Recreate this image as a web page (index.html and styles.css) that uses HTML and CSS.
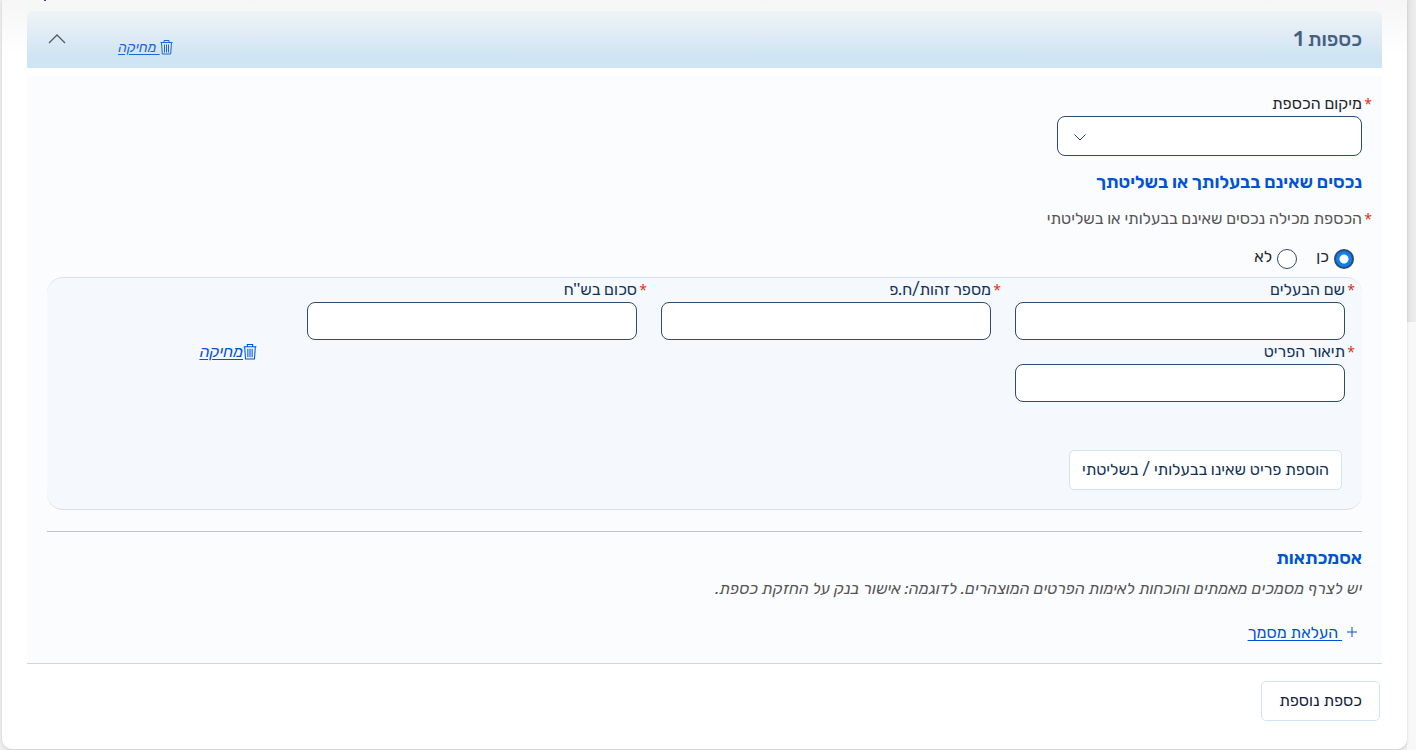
FILE: index.html
```html
<!DOCTYPE html>
<html lang="he" dir="rtl">
<head>
  <meta charset="UTF-8">
  <meta name="viewport" content="width=device-width, initial-scale=1.0">
  <title>כספות</title>
  <link rel="stylesheet" href="styles.css">
</head>
<body>
  <div class="scroll-track"><div class="scroll-thumb"></div></div>

  <main class="page-card">
    <div class="previous-section">
      <svg width="3" height="1" viewBox="0 0 3 1"><path d="M0 0h2v1H0z" fill="#0052d6"/></svg>
    </div>

    <header class="section-header">
      <h2>כספות 1</h2>
      <a href="#" class="delete-link header-delete">
        <svg class="trash" viewBox="0 0 13 15"><path d="M0.500 2.500h12M4 2.500v-2h5v2M1.500 2.500l0.800 11.500h8.400l0.800-11.500M4.500 4.500v8M6.500 4.500v8M8.500 4.500v8"/></svg><span>&nbsp;מחיקה</span>
      </a>
      <button type="button" class="collapse" aria-label="סגירה">
        <svg width="18" height="10" viewBox="0 0 18 10"><path d="M1 9l8-8 8 8"/></svg>
      </button>
    </header>

    <form class="section-body">
      <div class="field location">
        <label for="location"><span class="required">*</span>מיקום הכספת</label>
        <div class="select-wrap">
          <select id="location" name="location"><option value=""></option></select>
          <svg class="chevron" width="12" height="7" viewBox="0 0 12 7"><path d="M0.500 0.500l5.500 5.500 5.500-5.500"/></svg>
        </div>
      </div>

      <h3>נכסים שאינם בבעלותך או בשליטתך</h3>

      <p class="question"><span class="required">*</span>הכספת מכילה נכסים שאינם בבעלותי או בשליטתי</p>
      <div class="radios">
        <input type="radio" id="yes" name="foreign" checked>
        <label for="yes">כן</label>
        <input type="radio" id="no" name="foreign">
        <label for="no">לא</label>
      </div>

      <div class="items">
        <div class="item-grid">
          <div class="field">
            <label for="owner"><span class="required">*</span>שם הבעלים</label>
            <input type="text" id="owner" name="owner">
          </div>
          <div class="field">
            <label for="idnum"><span class="required">*</span>מספר זהות/ח.פ</label>
            <input type="text" id="idnum" name="idnum">
          </div>
          <div class="field">
            <label for="amount"><span class="required">*</span>סכום בש''ח</label>
            <input type="text" id="amount" name="amount">
          </div>
          <a href="#" class="delete-link item-delete">
            <svg class="trash" viewBox="0 0 13 15"><path d="M0.500 2.500h12M4 2.500v-2h5v2M1.500 2.500l0.800 11.500h8.400l0.800-11.500M4.500 4.500v8M6.500 4.500v8M8.500 4.500v8"/></svg><span>מחיקה</span>
          </a>
          <div class="field">
            <label for="description"><span class="required">*</span>תיאור הפריט</label>
            <input type="text" id="description" name="description">
          </div>
        </div>
        <button type="button" class="btn add-item">הוספת פריט שאינו בבעלותי / בשליטתי</button>
      </div>

      <hr>

      <h3>אסמכתאות</h3>
      <p class="hint">יש לצרף מסמכים מאמתים והוכחות לאימות הפרטים המוצהרים. לדוגמה: אישור בנק על החזקת כספת.</p>
      <a href="#" class="upload">
        <svg width="10" height="10" viewBox="0 0 10 10"><path d="M5 0v10M0 5h10"/></svg><span>&nbsp;העלאת מסמך</span>
      </a>
    </form>

    <button type="button" class="btn add-safe">כספת נוספת</button>
  </main>
</body>
</html>
```
FILE: styles.css
```css
* {
  box-sizing: border-box;
}
body {
  margin: 0;
  display: flex;
  align-items: stretch;
  background: #eeeeee;
  color: #212529;
  font-family: Rubik, "Open Sans", "DejaVu Sans", sans-serif;
  font-size: 16px;
  line-height: 20px;
}
h2, h3, p {
  margin: 0;
}
button, input, select {
  font: inherit;
  color: inherit;
}
svg {
  fill: none;
  stroke: currentColor;
}
.scroll-track {
  flex: 0 0 9px;
  background: #f8f8f8;
}
.scroll-thumb {
  height: 322px;
  background: linear-gradient(to left, #eeeeee, #e2e2e2);
}
.page-card {
  flex: 1;
  margin: 0 0 1px 2px;
  padding: 0 25px 28px;
  background: linear-gradient(#f6f6f6, #f8f8f8 15px, #ffffff 55px);
  border-radius: 0 0 10px 10px;
  box-shadow: 0 1px 3px rgba(0, 0, 0, 0.15);
}
.previous-section {
  display: flex;
  justify-content: flex-end;
  height: 11px;
  padding-left: 17px;
}
.previous-section svg {
  stroke: none;
}
.section-header {
  display: flex;
  align-items: center;
  height: 57px;
  padding: 0 20px 2px 21px;
  background: linear-gradient(#eff4f5, #dfebf5 24px, #d0e5f4 44px);
  border-radius: 6px 6px 0 0;
}
.section-header h2 {
  margin-left: auto;
  color: #46607f;
  font-size: 20px;
  font-weight: 500;
  line-height: 28px;
}
.collapse {
  display: flex;
  padding: 0;
  border: 0;
  background: none;
  color: #555b60;
  stroke-width: 1.3;
}
.delete-link {
  display: flex;
  align-items: center;
  color: #0052d6;
  font-style: italic;
  text-decoration: none;
}
.delete-link span,
.upload span {
  text-decoration: underline;
  text-underline-offset: 2px;
}
.header-delete {
  margin: 18px 0 0 52px;
  color: #2265d8;
  font-size: 14px;
}
.trash {
  width: 13px;
  height: 15px;
}
.section-body {
  margin-top: 8px;
  padding: 18px 20px 20px;
  background: #fbfcfe;
  border-bottom: 1px solid #d0d5dd;
}
.required {
  display: inline-block;
  width: 10px;
  color: #d9290b;
  font-family: "Open Sans", sans-serif;
  font-size: 14px;
}
.field {
  display: flex;
  flex-direction: column;
}
.field label {
  height: 22px;
  white-space: nowrap;
}
.field input {
  width: calc(100% - 10px);
  height: 38px;
  margin: 0 10px 0 0;
  padding: 0 12px;
}
.field input,
.field select {
  background: #ffffff;
  border: 1px solid #2f4b70;
  border-radius: 8px;
}
.location {
  width: 315px;
  margin-right: -10px;
}
.select-wrap {
  display: grid;
  align-items: center;
  margin-right: 10px;
}
.select-wrap select {
  grid-area: 1 / 1;
  width: 100%;
  height: 40px;
  appearance: none;
}
.chevron {
  grid-area: 1 / 1;
  justify-self: end;
  margin: 3px 0 0 17px;
  color: #1c4a80;
  pointer-events: none;
}
h3 {
  color: #0052d6;
  font-size: 18px;
  font-weight: 600;
  line-height: 24px;
}
.location + h3 {
  margin-top: 14px;
}
.question {
  margin: 15px -10px 0 0;
  color: #555555;
}
.radios {
  display: flex;
  padding: 20px 8px 8px;
}
.radios input {
  appearance: none;
  width: 20px;
  height: 20px;
  margin: 0;
  background: #ffffff;
  border: 1px solid #2f4b70;
  border-radius: 50%;
}
.radios input:checked {
  border-width: 2px;
  background: radial-gradient(#ffffff 4px, #0d7ff5 5px);
}
.radios label {
  margin: -2px 5px 2px 19px;
}
.items {
  padding: 2px 7px 19px 17px;
  background: #f5f8fd;
  border: solid #dbe0e7;
  border-width: 1px 0;
  border-radius: 16px;
}
.item-grid {
  display: grid;
  grid-template-columns: repeat(3, 340fr) 229fr;
  column-gap: 14px;
  row-gap: 2px;
}
.items .field,
.items .btn {
  color: #12325a;
}
.item-delete {
  align-self: end;
  justify-self: start;
  margin: 0 36px -22px 0;
}
.item-delete .trash {
  width: 14px;
  height: 16px;
}
.btn {
  height: 40px;
  padding: 0 12px;
  background: #ffffff;
  border: 1px solid #d0e5f4;
  border-radius: 5px;
}
.add-item {
  display: block;
  margin: 48px 13px 0 0;
}
hr {
  margin: 21px 0 14px;
  border: 0;
  border-top: 1px solid #bfc3c8;
}
.hint {
  margin-top: 9px;
  color: #555555;
  font-style: italic;
}
.upload {
  display: flex;
  align-items: center;
  width: max-content;
  margin: 24px 5px 0 0;
  color: #0052d6;
  text-decoration: none;
}
.upload svg {
  margin-bottom: 2px;
}
.upload span {
  margin-right: 5px;
}
.add-safe {
  display: block;
  margin: 17px 2px 0 0;
  padding: 0 17px;
  color: #12213c;
}
```
